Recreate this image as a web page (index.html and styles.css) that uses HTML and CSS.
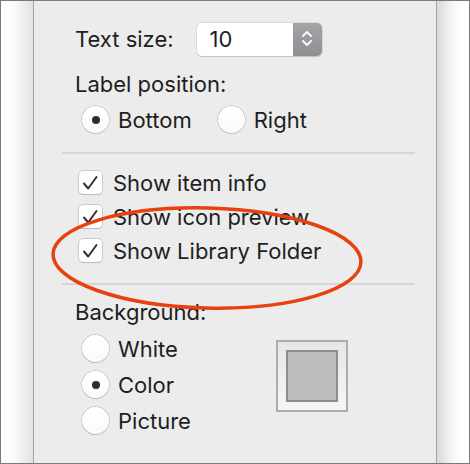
FILE: index.html
```html
<!doctype html>
<html>

<head>
    <meta charset="UTF-8">
    <title>View Options</title>
    <link rel="stylesheet" href="styles.css">
</head>

<body>
    <div id="frame">
        <div class="gutter gauche"></div>
        <div id="panel">
            <div class="row taille">
                <span>Text size:</span>
                <div class="champ">
                    <span class="valeur">10</span>
                    <span class="stepper">
                        <svg width="12" height="20" viewBox="0 0 12 20">
                            <path d="M2 7 L6 3 L10 7 M2 12 L6 16 L10 12" fill="none" stroke="#fff" stroke-width="1.8" stroke-linecap="round" stroke-linejoin="round"/>
                        </svg>
                    </span>
                </div>
            </div>
            <div class="titre label">Label position:</div>
            <div class="radios horizontal">
                <label class="radio"><span class="rond coche"></span>Bottom</label>
                <label class="radio"><span class="rond"></span>Right</label>
            </div>

            <hr class="sep">

            <div class="cases">
                <label class="case"><span class="boite"><svg width="23" height="23" viewBox="0 0 23 23"><path d="M5 12.5 L9.2 17.5 L17.5 6" fill="none" stroke="#333" stroke-width="2" stroke-linecap="round" stroke-linejoin="round"/></svg></span>Show item info</label>
                <label class="case"><span class="boite"><svg width="23" height="23" viewBox="0 0 23 23"><path d="M5 12.5 L9.2 17.5 L17.5 6" fill="none" stroke="#333" stroke-width="2" stroke-linecap="round" stroke-linejoin="round"/></svg></span>Show icon preview</label>
                <label class="case"><span class="boite"><svg width="23" height="23" viewBox="0 0 23 23"><path d="M5 12.5 L9.2 17.5 L17.5 6" fill="none" stroke="#333" stroke-width="2" stroke-linecap="round" stroke-linejoin="round"/></svg></span>Show Library Folder</label>
            </div>

            <hr class="sep">

            <div class="titre fond">Background:</div>
            <div class="bloc-fond">
                <div class="radios vertical">
                    <label class="radio"><span class="rond"></span>White</label>
                    <label class="radio"><span class="rond coche"></span>Color</label>
                    <label class="radio"><span class="rond"></span>Picture</label>
                </div>
                <div class="puits"><div class="couleur"></div></div>
            </div>

            <!-- annotation rouge par-dessus -->
            <svg class="entoure" width="330" height="120" viewBox="0 0 330 120">
                <ellipse cx="157" cy="55" rx="154" ry="50" transform="rotate(1.5 157 55)" fill="none" stroke="#e8410f" stroke-width="3.5"/>
            </svg>
        </div>
        <div class="gutter droite"></div>
    </div>
</body>

</html>
```

FILE: styles.css
```css
body {
    padding: 0;
    margin: 0;
    font-family: "Inter", "Roboto", sans-serif;
    color: #1e1e1e;
}
* {
    box-sizing: border-box;
}
#frame {
    display: flex;
    width: 470px;
    height: 464px;
    border: solid 1px #7a7a7a;
    background-color: #fff;
}
.gutter {
    width: 32px;
}
.gauche {
    background: linear-gradient(to right, #fff 0%, #fbfbfb 40%, #e2e2e2 100%);
}
.droite {
    background: linear-gradient(to right, #d9d9d9 0%, #f4f4f4 45%, #fff 75%);
}

#panel {
    position: relative;
    flex: 1;
    background-color: #ececec;
    border-left: solid 1px #a2a2a2;
    border-right: solid 1px #a2a2a2;
    padding: 21px 0 0 41px;
    font-size: 22px;
    line-height: 24px;
}

/** Taille du texte */
.row {
    display: flex;
    align-items: center;
}
.taille {
    height: 34px;
    gap: 23px;
}
.champ {
    display: flex;
    width: 125px;
    height: 33px;
    background-color: #fff;
    border-radius: 5px;
    box-shadow: 0 0 0 0.5px #c8c8c8, 0 1px 1px rgba(0, 0, 0, 0.2);
}
.champ .valeur {
    flex: 1;
    padding-left: 13px;
    line-height: 33px;
}
.champ .stepper {
    width: 29px;
    display: flex;
    align-items: center;
    justify-content: center;
    border-radius: 0 5px 5px 0;
    background: linear-gradient(#a4a4a8, #8f8f94);
}

.titre.label {
    margin-top: 16px;
}

/** Boutons radio */
.radios {
    display: flex;
}
.radios.horizontal {
    gap: 26px;
    margin: 10px 0 0 7px;
}
.radios.vertical {
    flex-direction: column;
    gap: 9px;
    margin-left: 7px;
    width: 194px;
}
.radio {
    display: flex;
    align-items: center;
    gap: 9px;
    height: 27px;
}
.rond {
    width: 27px;
    height: 27px;
    border-radius: 50%;
    background: linear-gradient(#fff, #fafafa);
    box-shadow: 0 0 0 0.5px #a9a9a9, 0 1px 1px rgba(0, 0, 0, 0.15);
    display: flex;
    align-items: center;
    justify-content: center;
}
.rond.coche::after {
    content: "";
    width: 8px;
    height: 8px;
    border-radius: 50%;
    background-color: #2c2c2c;
}

.sep {
    border: 0;
    border-top: solid 2px #d6d6d6;
    margin: 19px 21px 0 -13px;
}

/** Cases a cocher */
.cases {
    display: flex;
    flex-direction: column;
    gap: 11px;
    margin: 17px 0 0 4px;
}
.case {
    display: flex;
    align-items: center;
    gap: 11px;
    height: 23px;
}
.boite {
    width: 23px;
    height: 23px;
    border-radius: 4px;
    background-color: #fff;
    box-shadow: 0 0 0 0.5px #a9a9a9, 0 1px 1px rgba(0, 0, 0, 0.15);
}
.boite svg {
    display: block;
}
.cases + .sep {
    margin-top: 21px;
}

.titre.fond {
    margin-top: 15px;
}
.bloc-fond {
    display: flex;
    margin-top: 11px;
}
.puits {
    margin-top: 5px;
    width: 72px;
    height: 72px;
    border: solid 2px #adadad;
    background: linear-gradient(#e6e6e6, #f6f6f6);
    padding: 8px;
}
.couleur {
    width: 52px;
    height: 52px;
    border: solid 2px #8d8d8d;
    background-color: #bdbdbd;
}

.entoure {
    position: absolute;
    left: 16px;
    top: 202px;
    pointer-events: none;
}
```
